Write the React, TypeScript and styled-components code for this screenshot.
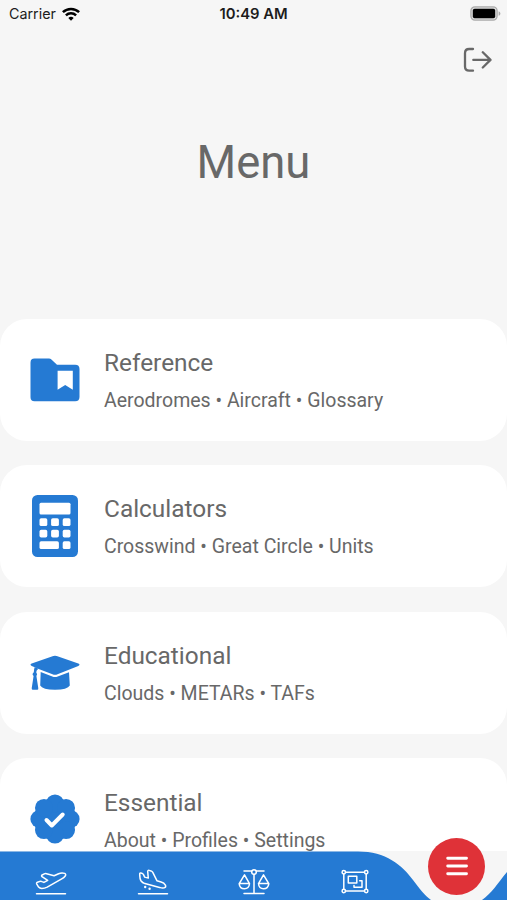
import React from "react";
import styled, { createGlobalStyle } from "styled-components";

const BLUE = "#257ad3";

const GlobalStyle = createGlobalStyle`
  * { box-sizing: border-box; }
  body { margin: 0; background: #f6f6f6; }
`;

const Screen = styled.div`
  width: 507px;
  height: 900px;
  display: flex;
  flex-direction: column;
  overflow: hidden;
  background: #f6f6f6;
  color: #686868;
  font-family: Roboto, sans-serif;
`;

const StatusBar = styled.header`
  height: 27px;
  flex: none;
  display: grid;
  grid-template-columns: 1fr auto 1fr;
  align-items: center;
  padding: 0 6px 0 9px;
  font-family: Inter, sans-serif;
  font-size: 14.3px;
  color: #1c1c1c;
`;

const Carrier = styled.div`
  display: flex;
  align-items: center;
  gap: 6px;
`;

const Clock = styled.div`
  font-weight: 600;
  font-size: 14.8px;
  margin-left: -3px;
`;

const Battery = styled.div`
  display: flex;
  justify-content: flex-end;
`;

const Toolbar = styled.div`
  height: 65px;
  flex: none;
  display: flex;
  justify-content: flex-end;
  align-items: center;
  padding-right: 15px;
`;

const LogoutButton = styled.button`
  display: flex;
  border: 0;
  padding: 0;
  background: none;
  color: #686868;
`;

const Title = styled.h1`
  flex: none;
  margin: 0;
  height: 226.5px;
  padding-top: 44px;
  text-align: center;
  font-size: 45.4px;
  line-height: 54px;
  font-weight: 400;
`;

const CardList = styled.main`
  height: 532.5px;
  flex: none;
  overflow: hidden;
  display: flex;
  flex-direction: column;
  gap: 24.6px;
`;

const Card = styled.section`
  flex: none;
  height: 122px;
  display: flex;
  align-items: center;
  gap: 24px;
  padding: 0 30px;
  border-radius: 27px;
  background: #fff;
`;

const CardIcon = styled.div`
  width: 50px;
  display: flex;
  justify-content: center;
  color: ${BLUE};
`;

const CardText = styled.div`
  display: flex;
  flex-direction: column;
  gap: 11px;
  padding-top: 2.6px;
  white-space: nowrap;
`;

const CardTitle = styled.h2`
  margin: 0;
  font-size: 24.4px;
  line-height: 29px;
  font-weight: 400;
`;

const CardSubtitle = styled.p`
  margin: 0;
  font-size: 19.5px;
  line-height: 26px;
`;

const TabBar = styled.nav`
  position: relative;
  height: 49px;
  flex: none;
  color: #fff;
`;

const TabBackdrop = styled.svg`
  position: absolute;
  inset: 0;
`;

const Tabs = styled.div`
  position: relative;
  height: 49px;
  display: grid;
  grid-template-columns: 102.4px 101.4px 101.4px 100px;
  align-items: start;
  justify-items: center;
  padding-top: 15px;
`;

const MenuButton = styled.button`
  position: absolute;
  left: 428px;
  top: -13.5px;
  width: 57px;
  height: 57px;
  display: flex;
  align-items: center;
  justify-content: center;
  border: 0;
  padding: 0;
  border-radius: 50%;
  background: #df3238;
`;

const WifiIcon = () => (
  <svg width="18" height="14" viewBox="0 0 18 14" fill="none" stroke="#000" strokeWidth="2.5">
    <path d="M.9 5.2a11.6 11.6 0 0 1 16.2 0" />
    <path d="M3.9 8.3a7.4 7.4 0 0 1 10.2 0" />
    <path d="M9 13.8 6.3 11a4 4 0 0 1 5.4 0z" fill="#000" stroke="none" />
  </svg>
);

const BatteryIcon = () => (
  <svg width="31" height="15" viewBox="0 0 31 15">
    <rect x=".9" y=".9" width="26.2" height="13.2" rx="4" fill="#ddd" stroke="#aaa" strokeWidth="1.3" />
    <rect x="2.8" y="2.8" width="22.4" height="9.4" rx="1.8" fill="#000" />
    <path d="M28.6 5.2v4.6c2.4-1 2.4-3.6 0-4.6z" fill="#aaa" />
  </svg>
);

const LogoutIcon = () => (
  <svg width="29" height="26" viewBox="0 0 29 26" fill="none" stroke="currentColor" strokeWidth="2.3" strokeLinecap="round" strokeLinejoin="round">
    <path d="M10 2H6.2Q2 2 2 6.2v13.3q0 4.2 4.2 4.2H10M10.3 12.9H27.5M19.8 5.3l7.7 7.6-7.7 7.6" />
  </svg>
);

const FolderIcon = () => (
  <svg width="50" height="44" viewBox="0 0 50 44">
    <path fill="currentColor" fillRule="evenodd" d="M4.5.5H19q1.4 0 2.4 1L27 6.8h18.2q4.3 0 4.3 4.3v28q0 4.2-4.3 4.2H4.5Q.5 43.3.5 39.2V4.7Q.5.5 4.5.5zM27.6 12.8v19l7.600-4.9 7.600 4.9v-19z" />
  </svg>
);

const CalculatorIcon = () => (
  <svg width="46" height="62" viewBox="0 0 46 62">
    <rect width="46" height="62" rx="5.5" fill="currentColor" />
    <g fill="#fff">
      <rect x="7.5" y="7.8" width="31" height="11.8" rx="1.5" />
      {[7.5, 19.1, 30.7].map((x) => (
        <React.Fragment key={x}>
          <rect x={x} y="23.3" width="7.8" height="7.8" rx="1.7" />
          <rect x={x} y="34.7" width="7.8" height="7.8" rx="1.7" />
        </React.Fragment>
      ))}
      <rect x="7.5" y="46.3" width="19.4" height="7.8" rx="1.7" />
      <rect x="30.7" y="46.3" width="7.8" height="7.8" rx="1.7" />
    </g>
  </svg>
);

const GraduationIcon = () => (
  <svg width="50" height="36" viewBox="0 0 50 36" fill="currentColor">
    <path d="M23.3.9q1.7-.5 3.400 0L48.300 8.6q2.400 1.200 0 2.300L27.500 19.3q-2.500 1.100-5 0L8.700 14.100 7.200 13.200 1.700 10.900q-2.400-1.100 0-2.300z" />
    <path d="m10.700 16.900 11.600 4.500q2.700 1 5.400 0L39 17.300l.8 13.300Q37.500 34.800 25 34.800T10.200 30.600z" />
    <path d="M4.800 12q-1 2-1 5.300c-1.600 1.200-1.600 2.700-.2 3.700L1.700 33.300q-.1 1.500 1.300 1.500h4.200q1.300 0 1.100-1.500L6.400 21q1.500-1.800-.2-3.700.2-2.300 2.200-3.600z" />
  </svg>
);

const VerifiedIcon = () => (
  <svg width="50" height="50" viewBox="0 0 50 50">
    <g fill="currentColor">
      <circle cx="25" cy="25" r="21" />
      {[0, 45, 90, 135, 180, 225, 270, 315].map((angle) => (
        <circle key={angle} cx="25" cy="9.4" r="9" transform={`rotate(${angle} 25 25)`} />
      ))}
    </g>
    <path d="m16.5 26 5.3 5.5 10.9-11" fill="none" stroke="#fff" strokeWidth="4" strokeLinecap="round" strokeLinejoin="round" />
  </svg>
);

const TabIcon = styled.svg.attrs({ width: 32, height: 30, viewBox: "0 0 32 30" })`
  fill: none;
  stroke: currentColor;
  stroke-width: 1.5px;
  stroke-linecap: round;
  stroke-linejoin: round;
`;

const TakeoffIcon = () => (
  <TabIcon>
    <path d="M1.5 27.7h29M2.500 16.200l2.300-.8q1.200-.3 2.200.2l1.900.8 3.800-2-5.700-3.700q-1-1 .2-1.700l2.100-1.100q1-.5 2.200-.2l7.600 2.100 4.500-2.100q3.100-1.400 6.100-.3 1.700 1 .5 2.600-1.200 1.800-3.500 2.900L12.200 21.200q-2.600 1.300-5.400 1.300-2 0-3.200-1.400L1.800 18.200q-.7-1.300.7-2z" />
  </TabIcon>
);

const LandingIcon = () => (
  <TabIcon>
    <path d="M1.5 27.7h29M3.500 7l1.300.3q1.200.3 1.700 1.400l1.200 2.400 3.600 1-.6-6.600q0-1.500 1.400-1.100l1.900.5q1.200.4 1.800 1.500l4.100 8.300 4.200 1.300q3 .9 4.300 3.100 1 2.200-1.200 2.700-2 .4-4.600-.4L7.900 17.600q-2.500-.8-4-2.900-1.100-1.800-1.200-6.800 0-1.100.8-.9z" />
    <g fill="currentColor" stroke="none"><circle cx="8.2" cy="21" r="1.2" /><circle cx="12.6" cy="22.7" r="1.2" /></g>
  </TabIcon>
);

const ScalesIcon = () => (
  <TabIcon>
    <circle cx="16" cy="6" r="2.3" />
    <path d="M6 5h7.5M18.5 5H26M16 8.5v19M6 27.5h20M6.5 8.8 1.2 17.6h10.3zM25.5 8.8l-5 8.8h10.300zM1.2 17.8q.6 5 5.200 5t5.100-5M20.500 17.800q.5 5 5 5t5.300-5" />
  </TabIcon>
);

const GroupIcon = () => (
  <TabIcon>
    <path d="M6.5 6.2h19M6.5 25h19M4.8 7.9v15.400M27.2 7.9v15.400" />
    {[[4.8, 6.2], [27.2, 6.2], [4.8, 25], [27.2, 25]].map(([x, y]) => (
      <circle key={`${x}-${y}`} cx={x} cy={y} r="1.7" />
    ))}
    <path d="M9.3 10.2h8.500v6.800h-8.500zM15 19.500v1.700h8v-6.500h-2.300" />
  </TabIcon>
);

const cards = [
  { title: "Reference", topics: ["Aerodromes", "Aircraft", "Glossary"], icon: <FolderIcon /> },
  { title: "Calculators", topics: ["Crosswind", "Great Circle", "Units"], icon: <CalculatorIcon /> },
  { title: "Educational", topics: ["Clouds", "METARs", "TAFs"], icon: <GraduationIcon /> },
  { title: "Essential", topics: ["About", "Profiles", "Settings"], icon: <VerifiedIcon /> },
];

export default function App() {
  return (
    <>
      <GlobalStyle />
      <Screen>
        <StatusBar>
          <Carrier>Carrier <WifiIcon /></Carrier>
          <Clock>10:49 AM</Clock>
          <Battery><BatteryIcon /></Battery>
        </StatusBar>
        <Toolbar>
          <LogoutButton aria-label="Log out"><LogoutIcon /></LogoutButton>
        </Toolbar>
        <Title>Menu</Title>
        <CardList>
          {cards.map((card) => (
            <Card key={card.title}>
              <CardIcon>{card.icon}</CardIcon>
              <CardText>
                <CardTitle>{card.title}</CardTitle>
                <CardSubtitle>{card.topics.join(" • ")}</CardSubtitle>
              </CardText>
            </Card>
          ))}
        </CardList>
        <TabBar>
          <TabBackdrop width="507" height="49" viewBox="0 0 507 49">
            <path fill={BLUE} d="M0 .5H358C386 .5 402 14 413 29C420 38 424 44 431 49H0zM507 20V49H482C492 42 497 33 507 21z" />
          </TabBackdrop>
          <Tabs>
            <TakeoffIcon />
            <LandingIcon />
            <ScalesIcon />
            <GroupIcon />
          </Tabs>
          <MenuButton aria-label="Menu">
            <svg width="24" height="22" viewBox="0 0 24 22" stroke="#fff" strokeWidth="2.9" strokeLinecap="round">
              <path d="M2.7 3.2h18.800M2.7 11h18.800M2.7 18.8h18.800" />
            </svg>
          </MenuButton>
        </TabBar>
      </Screen>
    </>
  );
}
